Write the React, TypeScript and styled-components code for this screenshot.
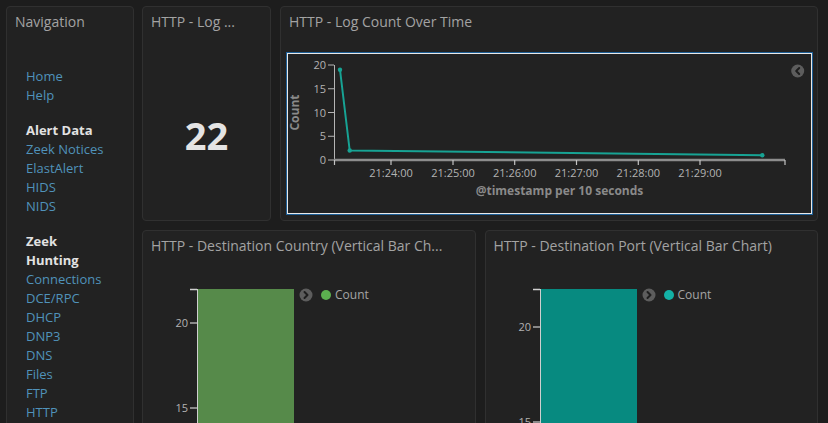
import styled, { createGlobalStyle } from "styled-components"

const GlobalStyle = createGlobalStyle`
  html, body {
    margin: 0;
    padding: 0;
    background: #1d1d1d;
    overflow: hidden;
  }
  body {
    font-family: "Open Sans", "DejaVu Sans", sans-serif;
  }
`

const Page = styled.div`
  display: flex;
  gap: 8px;
  height: 423px;
  padding: 6px 10px 0 6px;
  box-sizing: border-box;
  overflow: hidden;
`

const Workspace = styled.div`
  display: grid;
  grid-template-rows: 215px 260px;
  row-gap: 9px;
  width: 676px;
`

const TopRow = styled.div`
  display: grid;
  grid-template-columns: 129px 1fr;
  column-gap: 9px;
`

const BottomRow = styled.div`
  display: grid;
  grid-template-columns: 1fr 1fr;
  column-gap: 9px;
`

const Panel = styled.section`
  display: flex;
  flex-direction: column;
  min-width: 0;
  background: #222222;
  border: 1px solid #303030;
  border-radius: 4px;
  box-sizing: border-box;
  overflow: hidden;
`

const NavPanel = styled(Panel)`
  width: 128px;
  height: 480px;
  flex: none;
`

const PanelTitle = styled.h2`
  margin: 0;
  padding: 5px 8px 0;
  font-size: 14px;
  font-weight: 400;
  line-height: 20px;
  color: #a3a3a3;
  white-space: nowrap;
  overflow: hidden;
  text-overflow: ellipsis;
`

const NavList = styled.nav`
  display: flex;
  flex-direction: column;
  width: 84px;
  padding: 35px 0 0 19px;
  font-size: 13px;
  line-height: 19px;
`

const NavHeading = styled.strong`
  margin-top: 16px;
  font-weight: 700;
  color: #e2e2e2;
`

const NavLink = styled.a`
  color: #5092ba;
  text-decoration: none;
`

const MetricBody = styled.div`
  flex: 1;
  display: flex;
  align-items: center;
  justify-content: center;
  padding-top: 18px;
`

const MetricValue = styled.span`
  font-size: 38px;
  font-weight: 700;
  line-height: 1;
  color: #e4e4e4;
`

const ChartFrame = styled.div`
  flex: 1;
  margin: 21px 5px 6px 6px;
  border: 1px solid #e8e8e8;
  box-shadow: 0 0 0 1px #1d5f97;
  display: flex;
`

const ChartSvg = styled.svg`
  display: block;
  font-family: "Open Sans", "DejaVu Sans", sans-serif;
  overflow: visible;
`

const BarArea = styled.div`
  display: flex;
  align-items: flex-start;
  margin-top: 24px;
`

const Legend = styled.div`
  display: flex;
  align-items: center;
  margin: 7px 0 0 5px;
  height: 16px;
`

const LegendDot = styled.span<{ $color: string }>`
  width: 10px;
  height: 10px;
  margin: 0 4px 0 8px;
  border-radius: 50%;
  background: ${p => p.$color};
`

const LegendLabel = styled.span`
  font-size: 12px;
  line-height: 16px;
  color: #a5a5a5;
`

function ChevronCircle({ dir, cx, cy }: { dir: "left" | "right"; cx: number; cy: number }) {
  const d = dir === "left" ? "M1.5 -3 L-1.5 0 L1.5 3" : "M-1.5 -3 L1.5 0 L-1.5 3"
  return (
    <g transform={`translate(${cx} ${cy})`}>
      <circle r="6.5" fill="#5d5d5d" />
      <path d={d} fill="none" stroke="#1e1e1e" strokeWidth="2" strokeLinecap="round" strokeLinejoin="round" />
    </g>
  )
}

const yCount = (v: number) => 106 - v * 4.75

const timeTicks = [
  { x: 103, label: "21:24:00" },
  { x: 165, label: "21:25:00" },
  { x: 226.7, label: "21:26:00" },
  { x: 288.5, label: "21:27:00" },
  { x: 350.3, label: "21:28:00" },
  { x: 412, label: "21:29:00" },
]

const points = [
  { x: 52, v: 19 },
  { x: 61.7, v: 2 },
  { x: 474.3, v: 1 },
]

function LogCountChart() {
  const line = points.map(p => `${p.x},${yCount(p.v)}`).join(" ")
  return (
    <ChartSvg width="523" height="159" viewBox="0 0 523 159">
      {[0, 5, 10, 15, 20].map(v => (
        <g key={v}>
          <line x1="40" x2="46" y1={yCount(v)} y2={yCount(v)} stroke="#b5b5b5" strokeWidth="1" />
          <text x="38" y={yCount(v) + 4} textAnchor="end" fontSize="11" fill="#b3b3b3">{v}</text>
        </g>
      ))}
      <line x1="46.5" x2="46.5" y1="11" y2="106" stroke="#b5b5b5" strokeWidth="1" />
      <line x1="46" x2="497" y1="106" y2="106" stroke="#8d8d8d" strokeWidth="2.5" />
      {[{ x: 46.5, label: "" }, ...timeTicks, { x: 497, label: "" }].map(t => (
        <g key={t.x}>
          <line x1={t.x} x2={t.x} y1="106" y2="111" stroke="#c4c4c4" strokeWidth="1.2" />
          {t.label && (
            <text x={t.x} y="123" textAnchor="middle" fontSize="11" fill="#b3b3b3">{t.label}</text>
          )}
        </g>
      ))}
      <text x="271.5" y="141" textAnchor="middle" fontSize="12" fontWeight="700" fill="#8a8a8a">
        @timestamp per 10 seconds
      </text>
      <text transform="translate(11 58.5) rotate(-90)" textAnchor="middle" fontSize="12" fontWeight="700" fill="#8a8a8a">
        Count
      </text>
      <polyline points={line} fill="none" stroke="#17a394" strokeWidth="2" strokeLinejoin="round" />
      {points.map(p => (
        <circle key={p.x} cx={p.x} cy={yCount(p.v)} r="2.2" fill="#17a394" />
      ))}
      <ChevronCircle dir="left" cx={509.7} cy={17} />
    </ChartSvg>
  )
}

function BarChart({ unit, labels, color }: { unit: number; labels: number[]; color: string }) {
  const y = (v: number) => 9 + (22 - v) * unit
  return (
    <ChartSvg width="151" height="200" viewBox="0 0 151 200">
      <rect x="54" y={y(22)} width="97" height={200 - y(22)} fill={color} />
      <line x1="54.5" x2="54.5" y1={y(22)} y2="200" stroke="#cfcfcf" strokeWidth="1" />
      <line x1="47" x2="54" y1={y(22) + 0.5} y2={y(22) + 0.5} stroke="#d0d0d0" strokeWidth="1.5" />
      {labels.map(v => (
        <g key={v}>
          <line x1="47" x2="54" y1={y(v)} y2={y(v)} stroke="#d0d0d0" strokeWidth="1.2" />
          <text x="45" y={y(v) + 4} textAnchor="end" fontSize="11" fill="#b3b3b3">{v}</text>
        </g>
      ))}
    </ChartSvg>
  )
}

function BarPanel({ title, unit, barColor, dotColor }: { title: string; unit: number; barColor: string; dotColor: string }) {
  return (
    <Panel>
      <PanelTitle>{title}</PanelTitle>
      <BarArea>
        <BarChart unit={unit} labels={[20, 15]} color={barColor} />
        <Legend>
          <svg width="14" height="14" viewBox="0 0 14 14">
            <ChevronCircle dir="right" cx={7} cy={7} />
          </svg>
          <LegendDot $color={dotColor} />
          <LegendLabel>Count</LegendLabel>
        </Legend>
      </BarArea>
    </Panel>
  )
}

const alertLinks = ["Zeek Notices", "ElastAlert", "HIDS", "NIDS"]
const huntingLinks = ["Connections", "DCE/RPC", "DHCP", "DNP3", "DNS", "Files", "FTP", "HTTP"]

export default function App() {
  return (
    <>
      <GlobalStyle />
      <Page>
        <NavPanel>
          <PanelTitle>Navigation</PanelTitle>
          <NavList>
            <NavLink href="#">Home</NavLink>
            <NavLink href="#">Help</NavLink>
            <NavHeading>Alert Data</NavHeading>
            {alertLinks.map(l => <NavLink key={l} href="#">{l}</NavLink>)}
            <NavHeading>Zeek Hunting</NavHeading>
            {huntingLinks.map(l => <NavLink key={l} href="#">{l}</NavLink>)}
          </NavList>
        </NavPanel>
        <Workspace>
          <TopRow>
            <Panel>
              <PanelTitle>HTTP - Log ...</PanelTitle>
              <MetricBody>
                <MetricValue>22</MetricValue>
              </MetricBody>
            </Panel>
            <Panel>
              <PanelTitle>HTTP - Log Count Over Time</PanelTitle>
              <ChartFrame>
                <LogCountChart />
              </ChartFrame>
            </Panel>
          </TopRow>
          <BottomRow>
            <BarPanel
              title="HTTP - Destination Country (Vertical Bar Ch..."
              unit={17}
              barColor="#568a4a"
              dotColor="#5cb04f"
            />
            <BarPanel
              title="HTTP - Destination Port (Vertical Bar Chart)"
              unit={19}
              barColor="#078a80"
              dotColor="#13b1a6"
            />
          </BottomRow>
        </Workspace>
      </Page>
    </>
  )
}
